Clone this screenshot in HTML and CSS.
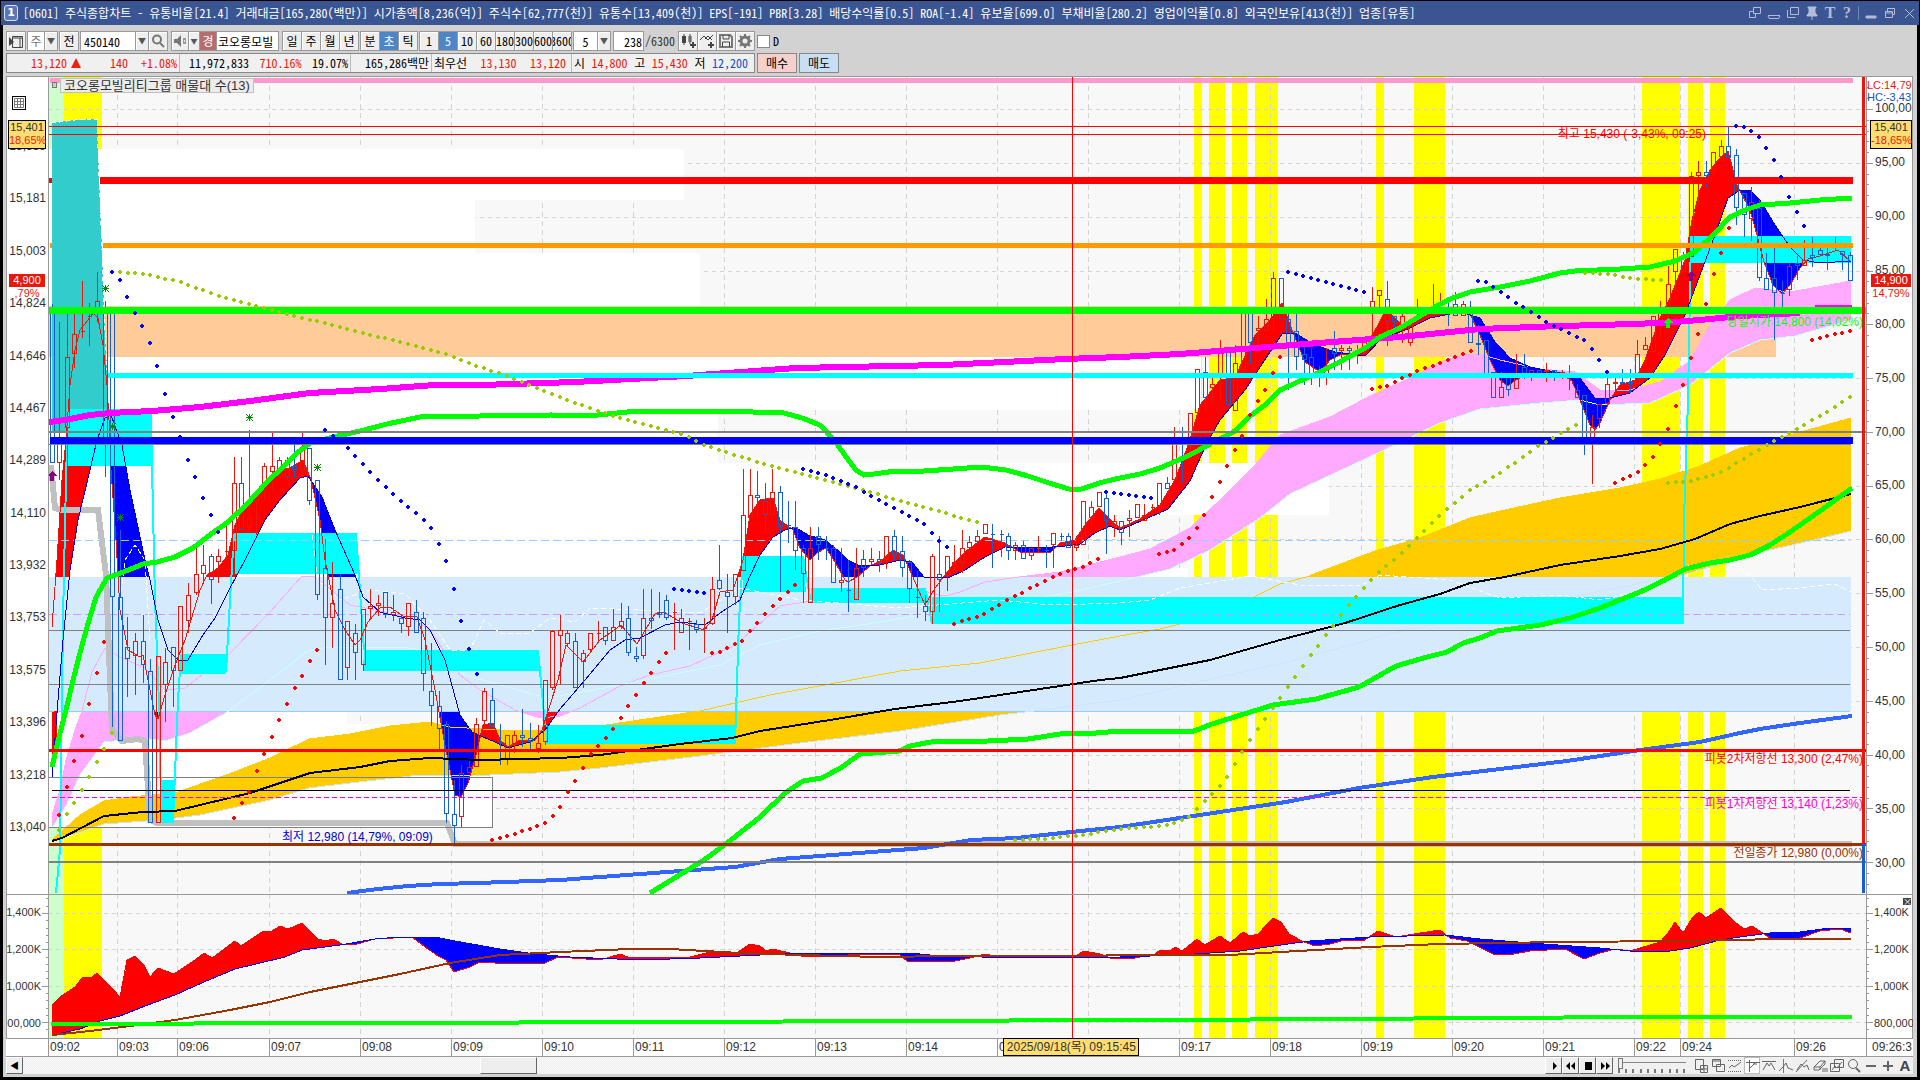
FILE: index.html
```html
<!DOCTYPE html>
<html lang="ko">
<head>
<meta charset="utf-8">
<title>[0601] 주식종합차트</title>
<link rel="stylesheet" href="styles.css">
</head>
<body>
<div class="app">
  <header class="titlebar">
    <span class="badge">1</span>
    <h1 class="caption">[0601] 주식종합차트 - 유통비율[21.4] 거래대금[165,280(백만)] 시가총액[8,236(억)] 주식수[62,777(천)] 유통수[13,409(천)] EPS[-191] PBR[3.28] 배당수익률[0.5] ROA[-1.4] 유보율[699.0] 부채비율[280.2] 영업이익률[0.8] 외국인보유[413(천)] 업종[유통]</h1>
    <div class="winbtns">
      <button aria-label="분리"><svg width="14" height="14"><path d="M5.5 1.5h7v6h-7zM1.5 5.5v6h6v-4M1.5 5.5h4"/></svg></button>
      <button aria-label="내리기"><svg width="14" height="14"><path d="M1 9.5h12M2 12.5h10M1 10l1 2M13 10l-1 2"/></svg></button>
      <button aria-label="복제"><svg width="14" height="14"><path d="M4.500 1.500h8v7h-8zM1.500 4v7.500h8"/></svg></button>
      <button aria-label="고정"><svg width="14" height="14"><path class="solid" d="M3 1h8v1h-1v5l2 2v1H2V9l2-2V2H3z"/><path d="M7 9v5"/></svg></button>
      <button aria-label="글꼴" class="serif">T</button>
      <button aria-label="도움말" class="serif">?</button>
      <i class="bar"></i>
      <button aria-label="최소화"><svg width="14" height="14"><path class="solid" d="M2 10h10v2H2z"/></svg></button>
      <button aria-label="이전 크기"><svg width="14" height="14"><path d="M4.500 5V2.500h7v6h-2M2.500 5.500h7v6h-7zM2 7h8"/></svg></button>
      <button aria-label="닫기"><svg width="14" height="14"><path d="M3 3l9 9M12 3l-9 9"/></svg></button>
    </div>
  </header>

  <div class="frame">
    <div class="toolbar">
      <button class="tb w20" aria-label="패널"><svg width="16" height="16"><path class="k" d="M4.500 3.500h10v11h-10zM4 5h11M12 5v9"/><path class="kf" d="M1 4v9l5-4z"/></svg></button>
      <div class="combo"><button class="tb w18 dim">주</button><button class="tb w14" aria-label="목록">▼</button></div>
      <button class="tb w20">전</button>
      <div class="combo"><input class="code" aria-label="종목코드" value="450140"><button class="tb w14" aria-label="종목 목록">▼</button><button class="tb w20" aria-label="검색"><svg width="16" height="16"><circle class="g2" cx="7" cy="6.500" r="4"/><path class="g2" d="M10 10l4 4"/></svg></button></div>
      <div class="combo gap"><button class="tb w18" aria-label="소리"><svg width="14" height="14"><path class="kf2" d="M1 5h3l4-4v12L4 9H1z"/><path class="k" d="M10 5h3M10 9h3M10 7h1M12 7h1"/></svg></button><button class="tb w12" aria-label="소리 설정">▼</button><span class="warn">경</span><input class="name" aria-label="종목명" value="코오롱모빌"></div>
      <div class="combo gap"><button class="tb w20">일</button><button class="tb w20">주</button><button class="tb w20">월</button><button class="tb w20">년</button></div>
      <div class="combo"><button class="tb w20">분</button><button class="tb w20 on">초</button><button class="tb w20">틱</button></div>
      <div class="combo"><button class="tb w20">1</button><button class="tb w20 on">5</button><button class="tb w20">10</button><button class="tb w20">60</button><button class="tb w20">180</button><button class="tb w20">300</button><button class="tb w20">600</button><button class="tb w20">3600</button></div>
      <div class="combo"><input class="five" aria-label="간격" value="5"><button class="tb w14" aria-label="간격 목록">▼</button></div>
      <label class="count"><input value="238" aria-label="봉 개수">/6300</label>
      <div class="combo">
        <button class="tb w20" aria-label="봉 추가"><svg width="16" height="16"><path class="kf" d="M2 3h4v7H2z"/><path class="gf" d="M8 3h4v6H8z"/><path class="k" d="M4 1v11M10 1v10"/><path class="kf" d="M12 9h2v2h2v2h-2v2h-2v-2h-2v-2h2z"/></svg></button>
        <button class="tb w20" aria-label="지표 추가"><svg width="16" height="16"><path class="k" d="M1 7l4-4 4 4 5-5M6 6l3-3 4 4"/><path class="kf" d="M11 9h2v2h2v2h-2v2h-2v-2H9v-2h2z"/></svg></button>
        <button class="tb w20" aria-label="저장"><svg width="16" height="16"><path class="g2" d="M2 2h10l2 2v10H2z"/><path class="k" d="M5 2v4h6V2M4.500 14V9h7v5"/></svg></button>
        <button class="tb w20" aria-label="설정"><svg width="16" height="16"><circle cx="8" cy="8" r="4" class="g3"/><path class="g2" d="M8 1v3M8 12v3M1 8h3M12 8h3M3 3l2 2M11 11l2 2M3 13l2-2M11 5l2-2"/></svg></button>
      </div>
      <label class="dcheck"><input type="checkbox">D</label>
    </div>

    <div class="quote">
      <div class="prices">
        <div class="cell c1"><b class="r">13,120<svg width="10" height="10"><path fill="#f02010" d="M5 0l5 10H0z"/></svg></b><b class="r">140</b><b class="r">+1.08%</b></div>
        <div class="cell c2"><b>11,972,833</b><b class="r">710.16%</b><b>19.07%</b></div>
        <div class="cell c3"><b>165,286백만</b></div>
        <div class="cell c4"><b>최우선</b><b class="r">13,130</b><b class="r">13,120</b></div>
        <div class="cell c5"><b>시</b><b class="r">14,800</b><b>고</b><b class="r">15,430</b><b>저</b><b class="b">12,200</b></div>
      </div>
      <button class="buy">매수</button>
      <button class="sell">매도</button>
    </div>

    <main class="chart">
      <section class="panel main">
        <svg class="plot" id="price" viewBox="6 77 1907 817" preserveAspectRatio="none" aria-label="가격 차트"></svg>
        <ul class="axis left"><li>15,359</li><li>15,181</li><li>15,003</li><li>14,824</li><li>14,646</li><li>14,467</li><li>14,289</li><li>14,110</li><li>13,932</li><li>13,753</li><li>13,575</li><li>13,396</li><li>13,218</li><li>13,040</li></ul>
        <div class="canvas">
          <span class="legend">코오롱모빌리티그룹 매물대 수(13)</span>
          <span class="note high">최고 15,430 (-3,43%, 09:25)</span>
          <span class="note low">최저 12,980 (14,79%, 09:09)</span>
          <span class="note open">당일시가 14,800 (14,02%)</span>
          <span class="note p2">피봇2차저항선 13,300 (2,47%)</span>
          <span class="note p1">피봇1차저항선 13,140 (1,23%)</span>
          <span class="note prev">전일종가 12,980 (0,00%)</span>
        </div>
        <ul class="axis right"><li>100,00</li><li>95,00</li><li>90,00</li><li>85,00</li><li>80,00</li><li>75,00</li><li>70,00</li><li>65,00</li><li>60,00</li><li>55,00</li><li>50,00</li><li>45,00</li><li>40,00</li><li>35,00</li><li>30,00</li></ul>
        <button class="gridbtn" aria-label="표"><svg width="10" height="10"><path d="M.5.500h9v9h-9zM3.500 0v10M6.500 0v10M0 3.500h10M0 6.500h10"/></svg></button>
        <div class="tag tagl"><span>15,401</span><em>18,65%</em></div>
        <div class="tag tagr"><span>15,401</span><em>-18,65%</em></div>
        <div class="now nowl"><span>4,900</span><em>,79%</em></div>
        <div class="now nowr"><span>14,900</span><em>14,79%</em></div>
        <div class="lc"><span class="r">LC:14,79</span><span class="b">HC:-3,43</span></div>
      </section>
      <section class="panel sub">
        <svg class="plot" id="volume" viewBox="6 894 1907 144" preserveAspectRatio="none" aria-label="보조 지표"></svg>
        <ul class="axis left"><li>1,400K</li><li>1,200K</li><li>1,000K</li><li>00,000</li></ul>
        <div class="canvas"></div>
        <ul class="axis right"><li>1,400K</li><li>1,200K</li><li>1,000K</li><li>800,000</li></ul>
        <button class="closer" aria-label="지표 닫기">×</button>
      </section>
      <div class="times">
        <span></span><span>09:02</span><span>09:03</span><span>09:06</span><span>09:07</span><span>09:08</span><span>09:09</span><span>09:10</span><span>09:11</span><span>09:12</span><span>09:13</span><span>09:14</span><span>0</span><span></span><span>09:17</span><span>09:18</span><span>09:19</span><span>09:20</span><span>09:21</span><span>09:22</span><span>09:24</span><span>09:26</span><span class="end">09:26:3</span>
        <div class="stamp">2025/09/18(목) 09:15:45</div>
      </div>
    </main>

    <footer class="bottom">
      <button class="raised" aria-label="왼쪽">◀</button>
      <div class="track"><i class="thumb"></i></div>
      <div class="combo">
        <button class="raised" aria-label="재생"><svg width="12" height="12"><path d="M5 2v8l4-4z"/></svg></button>
        <button class="raised" aria-label="뒤로"><svg width="12" height="12"><path d="M5 2v8L1 6zM10 2v8L6 6z"/></svg></button>
        <button class="raised" aria-label="정지"><svg width="12" height="12"><path d="M3 2h7v8H3z"/></svg></button>
        <button class="raised" aria-label="앞으로"><svg width="12" height="12"><path d="M2 2v8l4-4zM7 2v8l4-4z"/></svg></button>
      </div>
      <div class="speed"><input type="range" min="0" max="9" value="0" aria-label="속도"><svg width="68" height="4"><path d="M1 0v4M8 0v4M15 0v4M23 0v4M30 0v4M37 0v4M44 0v4M52 0v4M59 0v4M66 0v4"/></svg></div>
      <div class="tools">
        <button aria-label="창 추가"><svg width="16" height="16"><path d="M2.500 1.500h8v10h-8z"/><path d="M7.500 7.500h7v7h-7zM11 8v6M8 11h6"/></svg></button>
        <button aria-label="겹치기"><svg width="16" height="16"><path d="M2.500 1.500h8v7h-8zM6.500 6.500h8v7h-8zM2 3h8"/></svg></button>
        <button aria-label="영역"><svg width="16" height="16"><path stroke-dasharray="1 1" d="M1 2.500h14M1 13.500h14"/><path d="M2 10l3-3 2 2 3-2 4-3"/></svg></button>
        <button class="set" aria-label="십자선"><svg width="16" height="16"><path d="M4.500 2v12M1 4.500h14M5 10l5-5M8 6h4"/></svg></button>
        <button aria-label="수평선"><svg width="16" height="16"><path d="M1 3.500h14M2 12l4-7 2 3 2-3 4 7"/></svg></button>
        <button aria-label="수직선"><svg width="16" height="16"><path stroke="#a06080" d="M5.500 1v14"/><path d="M1 13l4-4 3-4 2 5 5 2"/></svg></button>
        <button aria-label="추세선"><svg width="16" height="16"><path d="M1 14L12 2M2 12l4-6 3 3 3-2 2 5"/></svg></button>
        <button aria-label="지우기"><svg width="16" height="16"><path d="M2 9l6-6h5l-5 6zM2 9v3h5l6-6V3M8 9v3"/><path d="M11 10v4M13 10v4M15 10v4"/></svg></button>
        <button aria-label="차트 겹침"><svg width="16" height="16"><path d="M5.500 1.500h9v8h-9zM1.500 5.500h9v8h-9zM3 12l3-4 2 2 5-6"/></svg></button>
        <button aria-label="확대경"><svg width="16" height="16"><circle cx="7" cy="6" r="4.500"/><path stroke-width="2" d="M10 10l4 4"/></svg></button>
        <button aria-label="축소"><svg width="16" height="16"><path stroke-width="2" d="M3 8h10"/></svg></button>
        <button aria-label="확대"><svg width="16" height="16"><path stroke-width="2" d="M3 8h10M8 3v10"/></svg></button>
        <button class="big">A</button>
      </div>
    </footer>
  </div>
</div>
<script src="app.js"></script>
</body>
</html>
```
FILE: styles.css
```css
* { box-sizing: border-box; }
body { margin: 0; background: #000; }
body, button, input {
  font: 12px/16px "Noto Sans Mono CJK KR", "Noto Sans CJK KR", sans-serif;
  color: #000;
}
button { padding: 0; border: 0; background: none; }
ul { margin: 0; padding: 0; list-style: none; }
svg { display: block; }
.r { color: #e8180c; }
.b { color: #1050c8; }

.app { display: flex; flex-direction: column; height: 100vh; min-height: 600px; padding: 1px 1px 3px; }
.titlebar { display: flex; align-items: center; flex: none; height: 24px; padding: 0 3px; background: #3a5591; color: #fff; }
.badge { width: 14px; height: 16px; border: 1px solid #dde5f5; border-radius: 3px; background: #5a78b5; font: bold 11px/14px "DejaVu Sans", sans-serif; text-align: center; }
.caption { flex: 1; margin: 0 0 0 5px; font-size: 12px; font-weight: 400; white-space: nowrap; }
.winbtns { display: flex; align-items: center; gap: 5px; }
.winbtns svg { fill: none; stroke: #b0bcda; }
.winbtns .solid { fill: #b0bcda; }
.serif { width: 12px; font: bold 16px/16px "Liberation Serif", serif; color: #b0bcda; }
.bar { width: 1px; height: 14px; background: #7085b5; }

.frame { display: flex; flex-direction: column; flex: 1; min-height: 0; margin: 0 2px; padding: 0 4px 3px 3px; background: #d2d2d2; }
.toolbar { display: flex; align-items: center; gap: 1px; height: 28px; padding-top: 4px; }
.combo { display: flex; }
.gap { margin-left: 2px; }
.tb { height: 20px; border: 1px solid #999; background: #eee; margin-right: -1px; overflow: hidden; white-space: nowrap; display: flex; align-items: center; justify-content: center; box-shadow: inset 1px 1px #fff; }
.toolbar > .tb { margin-right: 0; }
.combo > :last-child { margin-right: 0; }
.w20 { width: 20px; }
.w18 { width: 18px; }
.w14 { width: 14px; font-size: 8px; color: #555; }
.w12 { width: 12px; font-size: 7px; color: #555; }
.dim { color: #777; background: #fff; }
.on { background: #4c86c6; color: #fff; box-shadow: none; }
.code, .name, .five, .count input { height: 20px; border: 1px solid #999; background: #fff; padding: 0 1px; margin-right: -1px; }
.code { width: 56px; padding-left: 3px; }
.name { width: 63px; }
.five { width: 25px; text-align: center; }
.warn { width: 18px; height: 20px; background: #b56c6c; border: 1px solid #999; color: #fff; line-height: 18px; text-align: center; margin-right: -1px; }
.count { display: flex; align-items: center; width: 64px; color: #333; margin-left: 1px; }
.count input { width: 31px; text-align: right; margin-right: 1px; }
.dcheck { display: flex; align-items: center; gap: 3px; margin-left: 1px; }
.dcheck input { appearance: none; width: 13px; height: 13px; margin: 0; border: 1px solid #888; background: #fff; }
.k { fill: none; stroke: #444; }
.kf { fill: #444; }
.kf2 { fill: #777; }
.gf { fill: #999; }
.g2 { fill: none; stroke: #777; stroke-width: 2; }
.g3 { fill: none; stroke: #777; stroke-width: 3; }

.quote { display: flex; gap: 2px; height: 20px; }
.prices { display: flex; border: 1px solid #888; background: #f0f0f0; }
.cell { display: flex; justify-content: space-between; align-items: center; padding: 0 2px; border-right: 1px solid #bbb; white-space: nowrap; }
.cell:last-child { border: 0; }
.cell b { font-weight: 400; }
.c1 { width: 173px; padding-left: 24px; }
.c1 b:first-child { display: flex; align-items: center; gap: 4px; margin-right: 16px; }
.c2 { width: 171px; padding-left: 9px; }
.c3 { width: 81px; justify-content: flex-end; }
.c4 { width: 140px; padding-right: 5px; }
.c5 { width: 182px; padding-right: 6px; }
.buy, .sell { width: 40px; border: 1px solid #888; background: #f6d0ca; }
.sell { background: #c8def4; }

.chart { display: flex; flex-direction: column; flex: 1; min-height: 0; margin-top: 3px; border: 1px solid #999; border-width: 1px 0 0; font-family: "Liberation Sans", "Noto Sans CJK KR", sans-serif; }
.panel { position: relative; display: grid; grid-template-columns: 42px 1fr 47px; min-height: 0; background: #fff; overflow: hidden; }
.main { flex: 817 1 0; }
.sub { flex: 144 1 0; }
.plot { position: absolute; inset: 0; width: 100%; height: 100%; shape-rendering: crispEdges; }
.axis { position: relative; display: flex; flex-direction: column; justify-content: space-between; color: #333; white-space: nowrap; }
.main .left { padding: 61px 2px 59px; text-align: right; }
.main .right { padding: 23px 0 23px 9px; }
.sub .left { padding: 10px 7px 7px 0; text-align: right; font-size: 11px; }
.sub .right { padding: 10px 0 7px 8px; font-size: 11px; }
.canvas { position: relative; overflow: hidden; }
.legend { position: absolute; left: 12px; top: 1px; height: 15px; padding: 0 3px; border: 1px solid #c0c0c0; background: #ececec; color: #333; font-size: 13px; line-height: 13px; white-space: nowrap; }
.note { position: absolute; white-space: nowrap; }
.high { right: 160px; top: 6%; color: #f00; }
.low { left: 234px; top: 92%; color: #00c; }
.open { right: 3px; top: 29%; color: #0f0; }
.p2 { right: 3px; top: 82.500%; color: #f00; }
.p1 { right: 3px; top: 88%; color: #f0c; }
.prev { right: 3px; top: 94%; color: #930; }
.tag, .now, .lc { position: absolute; display: flex; flex-direction: column; white-space: nowrap; font-size: 11px; }
.tag em, .now em { font-style: normal; color: #e8180c; }
.tag { top: 43px; width: 38px; height: 29px; border: 1px solid #000; background: #ffdd70; line-height: 13px; text-align: center; color: #333; }
.tagl { left: 2px; }
.tagr { right: 1px; width: 42px; }
.now { top: 197px; width: 36px; line-height: 13px; text-align: center; }
.now span { background: #e8180c; color: #fff; }
.nowl { left: 3px; }
.nowr { right: 2px; width: 40px; }
.lc { right: 0; top: 2px; width: 46px; line-height: 12px; }
.gridbtn { position: absolute; left: 6px; top: 19px; width: 14px; height: 14px; border: 1px solid #000; padding: 1px; }
.gridbtn svg { fill: none; stroke: #777; }
.closer { position: absolute; right: 2px; top: 4px; width: 8px; height: 7px; background: #444; color: #fff; font-size: 9px; line-height: 7px; }

.times { position: relative; flex: none; display: grid; grid-template-columns: 42px 69fr 60fr 92fr repeat(15, 91fr) 46fr 114fr 72fr 47px; height: 19px; border: 1px solid #999; border-width: 1px 0; background: #fff; color: #333; }
.times span { border-left: 1px solid #999; padding-left: 1px; min-width: 0; white-space: nowrap; }
.times span:first-child { border: 0; }
.times .end { padding-left: 5px; }
.stamp { position: absolute; left: 52.300%; top: -1px; width: 136px; height: 18px; border: 1px solid #000; background: #ffdd70; text-align: center; white-space: nowrap; }

.bottom { display: flex; flex: none; height: 17px; background: #f0f0f0; }
.raised { width: 17px; height: 17px; border: 1px solid; border-color: #fff #666 #666 #fff; background: #eee; font-size: 9px; line-height: 14px; display: flex; align-items: center; justify-content: center; }
.track { flex: 1; padding-left: 457px; background: repeating-conic-gradient(#eee 0 25%, #fafafa 0 50%) 0 0 / 2px 2px; }
.thumb { display: block; width: 57px; height: 17px; border: 1px solid; border-color: #fff #666 #666 #fff; background: #eee; }
.speed { width: 80px; padding: 0 5px; }
.speed input { appearance: none; display: block; width: 68px; height: 12px; margin: 0; background: linear-gradient(#888, #888) 0 5px / 100% 1px no-repeat; }
.speed input::-webkit-slider-thumb { appearance: none; width: 5px; height: 11px; border: 1px solid #777; background: #eee; }
.speed svg { stroke: #000; }
.tools { display: flex; gap: 1px; }
.tools button { width: 16px; height: 17px; }
.tools svg { fill: none; stroke: #666; }
.tools .set { background: #fff; border: 1px solid #bbb; }
.tools .big { font: bold 15px/16px "Liberation Sans", sans-serif; color: #444; }

.line { fill: none; }
```
FILE: app.js
```js
const NS = 'http://www.w3.org/2000/svg';
const price = document.getElementById('price');
const volume = document.getElementById('volume');

function add(svg, name, attrs) {
  const el = document.createElementNS(NS, name);
  for (const key in attrs) el.setAttribute(key, attrs[key]);
  svg.appendChild(el);
}
const rect = (svg, x, y, x2, y2, fill) => add(svg, 'rect', { x, y, width: x2 - x, height: y2 - y, fill });
const line = (svg, pts, stroke, width = 1, dash = '') =>
  add(svg, 'polyline', { points: pts, stroke, 'stroke-width': width, 'stroke-dasharray': dash, class: 'line' });
const poly = (svg, pts, fill) => add(svg, 'polygon', { points: pts, fill });
const hline = (svg, y, x, x2, stroke, width, dash) => line(svg, `${x},${y} ${x2},${y}`, stroke, width, dash);
const parse = s => s.split(' ').map(p => p.split(',').map(Number));
const reversed = s => s.split(' ').reverse().join(' ');

function at(pts, x) {
  for (let i = 1; i < pts.length; i++) {
    if (x <= pts[i][0]) {
      const [x0, y0] = pts[i - 1], [x1, y1] = pts[i];
      return y0 + (y1 - y0) * (x - x0) / (x1 - x0 || 1);
    }
  }
  return pts[pts.length - 1][1];
}

// Fills the gap between two averages: red while the fast one leads, blue otherwise.
function ribbon(svg, fast, slow) {
  const f = parse(fast), s = parse(slow);
  let red = '', blue = '';
  for (let x = 52; x < 1851; x++) {
    const a = Math.round(at(f, x)), b = Math.round(at(s, x));
    if (a < b) red += `M${x} ${a}h1V${b}h-1z`;
    if (a > b) blue += `M${x} ${b}h1V${a}h-1z`;
  }
  add(svg, 'path', { d: red, fill: '#f00' });
  add(svg, 'path', { d: blue, fill: '#00f' });
}

function dots(pts, color) {
  const p = parse(pts), n = Math.round((p[p.length - 1][0] - p[0][0]) / 7.58);
  for (let i = 0; i <= n; i++) {
    const x = Math.round(p[0][0] + i * 7.58), y = Math.round(at(p, x));
    add(price, 'path', { d: `M${x - 1} ${y - 2}h2v1h1v2h-1v1h-2v-1h-1v-2h1z`, fill: color });
  }
}

const STEPS = [117, 177, 269, 360, 451, 542, 633, 724, 815, 906, 997, 1088, 1179, 1270, 1361, 1452, 1543, 1634, 1680, 1794];
const BANDS = [[1194, 1202], [1209, 1225], [1232, 1247], [1255, 1278], [1376, 1384], [1414, 1445], [1642, 1680], [1688, 1703], [1710, 1725]];

function backdrop(svg, top, bottom, levels) {
  rect(svg, 48, top, 1866, bottom, '#f8f8f8');
  BANDS.forEach(([a, b]) => rect(svg, a, top, b, bottom, '#ff0'));
  rect(svg, 48, top, 64, bottom, '#cfc');
  rect(svg, 64, top, 102, bottom, '#ff0');
  STEPS.forEach(x => line(svg, `${x + .5},${top} ${x + .5},${bottom}`, '#d4d4d4', 1, '5 4'));
  levels.forEach(y => hline(svg, y + .5, 48, 1866, '#d4d4d4', 1, '4 4'));
}

const levels = [109, 163, 217, 271, 324, 378, 432, 486, 539, 593, 647, 701, 755, 808, 862];
backdrop(price, 77, 894, levels);

// Price-by-volume rows
[[149, 200, 684], [200, 253, 475], [253, 306, 700], [357, 410, 1201], [410, 463, 718], [463, 515, 1329], [515, 568, 1081], [568, 578, 1188], [711, 724, 347], [724, 776, 502], [776, 828, 492]]
  .forEach(([a, b, x]) => rect(price, 49, a, x, b, '#fff'));
rect(price, 49, 306, 1776, 357, '#fc9');

const goldTop = '52,840 80,815 104,801 130,797 175,793 229,774 270,758 309,739 350,734 390,726 430,722 450,727 500,730 560,730 606,725 700,711 770,695 830,684 900,671 980,663 1072,645 1120,636 1160,629 1200,619 1235,606 1260,594 1280,584 1306,577 1375,551 1420,538 1470,518 1500,511 1560,498 1620,488 1660,479 1700,466 1740,448 1790,435 1851,418';
const goldLow = '52,842 104,824 160,820 200,815 270,800 309,788 350,783 420,775 490,775 560,772 600,768 700,756 800,743 900,731 1000,715 1034,711 1120,700 1300,659 1393,633 1453,620 1560,599 1683,575 1720,564 1760,552 1810,541 1851,531';
const pinkTop = '52,815 60,790 66,760 75,730 82,711 92,672 105,648 120,657 145,668 165,690 185,688 230,653 270,612 302,576 315,577 350,605 375,610 415,620 430,630 460,675 480,690 515,710 540,718 560,716 580,708 620,686 650,675 690,666 735,645 780,606 830,598 880,590 905,588 945,596 960,592 985,582 1019,577 1060,572 1120,557 1150,549 1190,528 1220,500 1255,465 1280,435 1330,417 1370,396 1410,378 1440,362 1465,354 1480,354 1500,360 1540,369 1575,372 1600,390 1625,391 1660,382 1690,361 1710,325 1730,300 1755,288 1790,292 1851,281';
const pinkLow = '52,828 66,806 80,775 104,742 143,738 165,741 190,733 229,711 270,680 309,650 330,647 400,647 430,651 465,675 500,685 540,696 560,696 620,685 720,665 760,645 820,631 880,622 950,610 1000,605 1072,592 1120,581 1170,569 1210,550 1260,518 1290,494 1380,452 1440,423 1480,409 1540,403 1580,400 1600,405 1650,403 1690,385 1730,353 1760,340 1795,336 1851,320';
const fast = '52,627 57,560 62,480 66,440 70,385 75,350 80,330 88,320 93,313 98,318 103,345 107,385 109,420 111,470 116,540 120,610 128,650 140,657 143,655 150,690 155,715 158,719 165,695 175,665 185,640 200,590 207,575 218,568 228,555 235,525 245,505 262,487 275,472 290,468 303,460 311,480 320,520 325,560 335,610 345,630 355,645 360,640 368,622 380,608 390,607 403,616 417,617 425,640 435,690 445,745 455,795 461,797 468,783 476,755 483,725 493,723 500,740 508,747 520,740 535,740 542,730 550,705 558,680 566,645 583,662 600,640 621,625 637,644 655,614 664,612 682,623 704,630 712,620 720,592 733,590 743,560 750,515 760,500 773,498 780,520 793,530 800,548 810,560 817,553 826,548 835,562 845,580 848,582 857,577 870,566 882,560 893,550 903,555 912,575 925,605 935,588 945,575 955,562 965,552 985,537 1005,543 1020,552 1050,553 1060,543 1075,540 1085,525 1099,508 1115,524 1120,528 1140,519 1160,505 1175,480 1190,440 1200,405 1220,380 1235,378 1242,362 1255,335 1270,320 1282,303 1292,330 1305,362 1320,372 1330,360 1340,355 1355,354 1365,348 1378,325 1386,310 1395,318 1403,326 1412,320 1430,314 1445,311 1470,314 1480,335 1490,360 1500,380 1508,386 1516,380 1530,373 1560,373 1572,381 1580,400 1590,425 1595,430 1600,423 1610,400 1620,385 1635,380 1645,360 1660,318 1670,298 1685,260 1692,220 1700,190 1710,170 1720,158 1728,151 1737,185 1750,210 1757,235 1764,262 1773,285 1782,294 1790,285 1800,268 1808,259 1820,256 1838,250 1851,262';
const slow = '52,777 58,700 63,640 70,570 78,520 90,470 97,440 105,418 111,415 122,445 130,490 145,560 150,580 158,620 168,650 178,660 188,660 203,635 215,618 230,588 245,560 265,520 280,500 300,478 308,476 322,497 335,530 355,575 363,597 380,612 405,618 420,620 430,630 445,660 460,715 472,732 483,737 495,742 508,748 530,742 545,730 560,709 585,680 610,650 625,640 640,638 665,625 680,622 705,625 720,613 740,600 750,576 760,555 773,537 785,530 795,527 808,535 825,540 840,552 848,560 860,566 880,565 900,560 912,562 924,577 950,577 965,570 985,557 1005,547 1040,548 1065,546 1080,544 1095,533 1110,526 1120,530 1150,517 1168,509 1190,481 1205,447 1220,420 1245,390 1270,352 1282,334 1295,333 1315,345 1335,352 1365,356 1380,340 1410,328 1430,318 1460,312 1480,318 1495,342 1510,358 1530,367 1560,373 1580,378 1595,398 1610,398 1630,393 1650,378 1665,355 1685,315 1700,275 1715,235 1728,198 1740,190 1750,190 1760,200 1775,225 1790,247 1803,260 1820,263 1851,261';

poly(price, pinkTop + ' ' + reversed(pinkLow), '#faf');
poly(price, goldTop + ' ' + reversed(goldLow), '#fc0');
line(price, goldLow, '#cde4ff');
ribbon(price, fast, slow);
rect(price, 49, 577, 1851, 711, '#d6eafd');
hline(price, 711.5, 49, 1850, '#9cf');
line(price, pinkTop, '#faf');
line(price, pinkLow, '#c8ffff');
line(price, goldTop, '#fc0');
line(price, goldLow, '#cde4ff');

// Opening block and trailing silver step line
line(price, '51,465 55,508 62,510 98,510 106,575 112,730 122,741 138,739 145,741 150,820 157,823 447,823 455,844 1852,844', '#c0c0c0', 6);
hline(price, 777.5, 49, 492, '#808080');
hline(price, 827.5, 49, 492, '#808080');
line(price, '492.5,777 492.5,828', '#808080');
poly(price, '52,123 75,120 97,119 98,150 100,200 102,250 104,310 107,370 108,432 52,432', '#3cc');
line(price, '52,123 75,120 97,119 98,150 100,200 102,250 104,310 107,370 108,432', '#fff', 1, '4 3');
rect(price, 54, 711, 57, 745, '#f00');

// Range boxes
['68,410 151,410 151,466 68,466', '181,654 226,654 226,674 179,674', '235,533 356,533 358,574 235,574', '364,650 538,650 540,671 363,671', '546,725 735,725 735,744 546,744', '743,556 803,556 806,592 743,592', '811,588 925,588 931,603 811,603', '932,597 1683,597 1683,624 932,624', '1691,236 1851,236 1851,263 1691,263', '161,780 175,780 173,823 161,823']
  .forEach(p => poly(price, p, '#0ff'));
line(price, '56,893 60,850 63,620 66,480 68,410 151,410 152,466 155,600 160,730 161,822 173,822 178,700 181,654', '#0ff', 2);
line(price, '226,672 230,600 234,533', '#0ff', 2);
line(price, '356,533 364,650', '#0ff', 2);
line(price, '538,650 545,725', '#0ff', 2);
line(price, '735,744 739,620 743,556', '#0ff', 2);
line(price, '803,556 811,603', '#0ff', 2);
line(price, '925,588 932,624', '#0ff', 2);
line(price, '1683,624 1684,520 1688,400 1691,236', '#0ff', 2);

hline(price, 540.5, 49, 1850, '#9cf', 1, '8 4');
hline(price, 614.5, 49, 1850, '#c9f', 1, '8 4');
hline(price, 630.5, 49, 1850, '#808080');
hline(price, 684.5, 49, 1850, '#808080');
line(price, '120,600 125,560 135,545 145,560 150,640', '#fff', 1, '5 3');
line(price, '312,535 318,580 340,600 370,590 405,594 430,620 450,650 470,650 484,620 500,633 530,633 550,618 575,622 590,608 640,610 700,613 740,588 800,600 850,604 900,608 1000,600 1050,605 1120,603 1150,600 1180,588 1250,576 1300,585 1360,586 1380,575 1450,580 1500,598 1560,595 1600,600 1640,592 1690,565 1730,562 1750,575 1762,590 1800,588 1835,584 1851,592', '#fff', 1, '5 3');

line(price, fast, '#e8180c');
line(price, slow, '#00c');

// x, high, low, body top, body bottom, direction
const candles = `52,304,463,313,463,b 59,322,480,439,463,r 67,313,470,357,428,r 74,313,368,334,354,r 82,281,338,331,331,r 89,303,346,316,316,r 97,272,322,301,313,r 105,301,477,313,442,b 112,313,727,313,597,b 120,530,741,597,741,b 127,617,697,647,659,b 135,633,695,641,656,r 143,615,683,641,665,b 150,659,823,671,823,b 158,656,823,656,823,r 165,648,722,662,685,r 173,647,707,647,671,b 180,606,671,606,671,r 188,583,633,595,621,r 196,545,595,574,593,r 203,545,583,565,574,r 211,554,604,556,580,b 218,549,583,556,562,r 226,525,560,551,551,r 234,457,551,483,551,r 241,457,530,483,530,b 249,430,533,518,527,r 256,490,535,493,502,r 264,463,500,466,490,r 272,433,490,466,472,r 279,457,475,460,470,r 287,457,480,460,477,b 294,445,478,466,470,b 302,433,478,448,470,r 309,448,505,448,501,b 317,480,600,480,595,b 325,539,665,568,618,b 332,562,648,603,618,r 340,574,680,589,680,b 347,621,680,621,668,r 355,624,680,633,653,b 363,609,671,609,665,r 370,589,619,606,609,r 378,595,616,603,606,r 385,592,618,592,615,b 393,595,621,612,615,r 401,615,633,618,624,b 408,603,636,603,627,r 416,600,633,612,633,b 423,612,691,618,674,b 431,643,726,691,706,b 439,691,750,706,729,b 446,721,823,724,814,b 454,780,843,814,826,b 461,765,827,773,817,r 469,760,773,767,773,r 476,718,767,724,767,r 484,688,726,691,721,r 492,688,727,700,727,b 500,724,765,742,742,b 507,735,765,735,759,r 514,731,753,735,745,r 522,709,747,735,738,b 530,723,750,738,742,b 538,725,753,743,749,r 545,680,745,680,742,r 552,630,690,631,688,r 560,615,685,630,636,r 567,630,647,633,644,r 575,633,688,641,688,b 583,650,688,653,662,r 590,633,653,633,650,r 598,621,643,633,633,r 605,627,645,627,641,b 613,609,641,627,641,r 621,603,629,621,627,r 628,606,656,618,653,b 636,647,662,656,659,b 643,589,659,618,656,r 651,589,629,618,621,b 659,592,618,612,615,b 666,595,620,600,618,b 674,603,650,612,612,r 681,609,633,618,633,r 689,618,650,621,621,r 696,620,633,624,630,b 704,618,653,628,628,r 712,577,625,589,624,r 719,545,590,580,589,b 727,574,633,592,597,b 735,574,605,574,597,r 743,469,571,515,571,r 750,469,518,495,518,r 757,471,518,495,498,b 765,483,531,501,515,b 772,469,515,492,515,r 780,486,592,492,527,b 788,501,543,525,525,b 795,501,570,527,551,b 803,545,603,548,574,b 810,527,603,548,603,r 818,527,560,536,545,b 826,536,560,548,548,b 833,545,583,548,583,b 841,548,592,580,583,r 848,560,612,590,590,b 856,548,600,568,600,r 863,550,577,559,568,b 871,548,565,559,562,r 879,551,572,559,563,b 886,536,569,536,560,r 894,530,560,536,555,b 902,536,577,551,568,b 909,560,603,562,589,b 917,571,618,597,597,b 925,595,621,606,612,b 932,554,624,556,612,r 939,536,612,574,580,b 947,556,591,556,576,r 954,545,571,562,565,r 962,530,573,548,563,r 969,536,554,542,548,r 977,530,545,536,542,r 985,524,534,524,534,r 992,524,568,534,534,b 1001,530,557,534,534,b 1008,533,560,536,551,b 1015,542,560,545,551,r 1023,541,559,545,559,b 1031,548,560,548,556,r 1038,536,553,548,548,r 1046,545,568,550,550,b 1053,533,568,533,545,r 1061,533,541,536,536,b 1068,533,548,536,548,b 1076,536,551,545,548,r 1083,501,545,501,545,r 1091,501,527,507,518,r 1099,492,507,492,507,r 1106,492,554,498,521,b 1114,515,537,521,527,r 1121,521,545,521,533,b 1129,510,537,518,521,r 1137,504,518,504,518,r 1144,504,521,515,521,r 1152,504,516,507,507,r 1159,483,515,483,507,r 1167,477,489,483,489,b 1174,427,480,437,480,r 1182,427,483,437,440,b 1190,413,460,413,447,r 1197,369,425,369,413,r 1205,357,411,372,398,b 1212,373,404,384,388,r 1220,340,400,351,378,r 1228,351,405,351,405,b 1235,345,411,363,411,r 1243,313,375,313,370,r 1250,313,364,313,343,b 1258,316,348,328,331,r 1266,299,331,319,331,r 1273,272,331,278,319,r 1281,278,319,278,319,b 1288,313,390,319,348,b 1296,313,370,331,357,b 1304,345,385,354,360,b 1311,348,385,357,375,b 1319,366,387,372,372,b 1326,348,385,369,375,r 1334,331,370,348,354,b 1341,345,370,348,351,r 1349,346,370,348,351,b 1357,345,364,350,350,b 1364,337,354,340,348,r 1372,287,346,301,313,r 1379,290,310,290,296,r 1387,281,346,299,322,b 1394,316,330,316,322,b 1402,313,343,316,325,r 1410,325,346,325,343,r 1417,299,325,316,319,r 1433,284,315,314,314,r 1440,293,310,308,308,r 1448,301,326,308,308,b 1455,292,316,304,316,b 1463,301,316,304,316,r 1470,301,343,313,343,b 1478,325,355,343,345,b 1486,340,375,340,375,b 1493,372,398,372,398,b 1501,372,398,387,398,r 1508,375,396,375,390,b 1516,354,389,375,389,r 1524,354,379,367,375,b 1531,370,381,370,378,r 1539,370,375,370,375,b 1546,363,382,370,372,r 1554,370,381,370,378,b 1562,370,379,372,374,r 1569,365,390,376,378,b 1577,384,398,390,398,b 1584,395,455,395,442,b 1592,415,484,427,442,r 1599,404,428,404,419,r 1607,378,404,384,404,r 1615,375,392,382,384,r 1622,369,384,382,384,b 1630,369,393,382,384,b 1637,340,384,354,384,r 1645,337,350,345,350,r 1653,316,352,316,352,r 1660,301,338,313,323,r 1668,266,325,284,313,r 1675,249,300,249,272,r 1683,252,273,258,272,r 1691,172,257,176,257,r 1698,161,205,172,176,r 1706,161,187,172,176,b 1713,152,178,152,170,r 1721,140,157,146,157,r 1728,127,158,146,158,b 1736,149,225,155,208,b 1744,193,237,193,215,b 1751,187,241,202,219,r 1759,200,281,208,278,b 1766,253,290,278,290,b 1774,245,340,278,293,b 1782,281,307,293,293,b 1789,263,296,266,290,r 1797,256,280,263,266,b 1804,240,266,260,266,r 1812,237,267,255,258,b 1820,248,255,250,255,b 1827,243,270,254,256,b 1835,237,250,243,246,b 1842,251,270,251,255,b 1850,252,281,255,281,b`;
candles.split(' ').forEach(c => {
  const [x, h, l, a, b, d] = c.split(',').map((v, i) => i < 5 ? +v : v);
  const bottom = Math.max(b, a + 1);
  add(price, 'path', {
    d: `M${x + .5} ${h}V${a}M${x + .5} ${bottom}V${l}M${x - 1.5} ${a + .5}h4V${bottom - .5}h-4z`,
    fill: 'none', stroke: d === 'r' ? '#e8180c' : '#1560d0'
  });
});

line(price, '52,841 62,838 104,816 143,812 175,811 200,805 250,793 310,773 360,767 390,761 430,758 480,760 560,758 600,755 680,744 732,738 760,731 830,720 895,709 960,701 1040,689 1100,680 1120,678 1210,660 1280,640 1345,623 1400,605 1440,594 1470,583 1505,577 1560,565 1620,556 1660,549 1695,539 1730,524 1760,516 1800,507 1851,494', '#000', 2);
line(price, '347,893 378,889 408,886 440,884 478,883 560,880 640,874 735,867 780,859 846,854 924,848 971,840 1017,838 1071,832 1120,827 1200,815 1286,802 1359,788 1433,777 1567,761 1640,750 1700,742 1740,733 1760,729 1800,723 1852,716', '#36f', 4);
line(price, '49,422 65,420 90,415 110,413 152,411 200,407 250,401 310,393 380,389 435,385 480,385 575,382 686,376 796,368 943,365 1065,359 1120,357 1180,354 1230,350 1280,346 1345,341 1400,337 1440,333 1480,329 1560,326 1600,325 1660,323 1700,320 1740,316 1800,313', '#f0f', 6);
hline(price, 306, 1815, 1852, '#f0f', 2);
line(price, '52,767 59,737 66,710 73,680 80,653 87,627 96,597 107,578 121,573 143,564 157,562 175,557 193,548 211,534 228,522 246,505 267,482 283,467 297,453 310,443 333,437 360,431 387,424 420,417 480,416 551,415 588,416 637,411 722,411 784,413 802,418 820,425 835,441 846,457 856,470 864,475 874,474 896,471 924,471 953,469 981,467 1006,470 1028,476 1049,483 1069,489 1081,489 1103,482 1120,478 1140,474 1160,468 1190,455 1210,444 1235,431 1250,416 1265,405 1280,390 1300,381 1320,372 1345,359 1365,348 1380,337 1400,328 1420,316 1435,307 1450,299 1470,292 1500,287 1530,281 1560,273 1575,271 1620,269 1650,267 1675,261 1695,252 1715,233 1730,217 1745,210 1760,205 1790,203 1820,200 1852,198', '#0f0', 5);
line(price, '650,893 704,860 731,840 760,817 785,793 803,781 822,778 842,767 860,754 899,751 910,746 931,742 988,741 1028,739 1060,734 1096,733 1120,731 1194,731 1212,724 1273,705 1316,699 1359,687 1396,666 1427,657 1447,652 1463,643 1480,638 1497,631 1540,625 1570,618 1600,608 1640,592 1665,580 1685,569 1710,563 1730,560 1750,555 1770,545 1790,532 1820,511 1852,488', '#0f0', 5);

hline(price, 80.5, 50, 1853, '#f9c', 5);
hline(price, 126.5, 49, 1866, '#f00');
hline(price, 134.5, 49, 1866, '#f00');
hline(price, 180.5, 49, 52, '#f00', 5);
hline(price, 180.5, 100, 1853, '#f00', 7);
hline(price, 245.5, 50, 52, '#f90', 5);
hline(price, 245.5, 103, 1853, '#f90', 5);
hline(price, 310.5, 49, 1866, '#0f0', 7);
hline(price, 375.5, 108, 1853, '#0ff', 5);
hline(price, 432, 49, 1866, '#808080', 2);
hline(price, 440.5, 50, 1853, '#00f', 7);
hline(price, 444.5, 49, 1851, '#808080');
hline(price, 750.5, 49, 1866, '#f00', 3);
hline(price, 790.5, 52, 1850, '#000');
hline(price, 797.5, 52, 1866, '#f0c', 1, '5 3');
hline(price, 844.5, 49, 1866, '#930', 3);
hline(price, 862, 49, 1866, '#808080', 2);

dots('120,272 135,273 150,275 180,282 225,298 257,306 287,314 360,332 430,350 455,357 476,366 496,372 551,394 612,416 686,435 704,445 735,455 772,466 825,480 880,495 930,509 977,522', '#9c0');
dots('59,830 66,815 74,803 82,790 90,775 97,762 105,747 112,733', '#9c0');
dots('1015,840 1040,839 1083,835 1110,830 1169,825 1188,818 1224,782 1249,741 1280,698 1311,655 1345,610 1375,575 1400,555 1417,538 1440,515 1470,490 1500,473 1540,445 1560,434 1577,424', '#9c0');
dots('1585,273 1607,274 1630,278 1660,280', '#9c0');
dots('1668,483 1690,481 1720,473 1745,458 1765,446 1800,427 1830,410 1850,397', '#9c0');
['112,272 120,280 127,297 135,313 143,328 150,343 158,369 165,394 173,417 188,460 196,479 203,498 211,515 218,532', '325,430 347,447 370,472 393,494 423,519 431,528 438,542 446,561 454,589 461,621 469,649 476,674', '674,589 704,593', '803,469 825,475 856,487 871,496 894,508 924,524 939,541 947,547', '1106,492 1120,494 1152,498', '1288,272 1320,280 1364,292', '1478,281 1486,282 1501,292 1516,303 1540,318 1546,322 1584,340 1592,349 1600,361 1607,372', '1736,126 1744,127 1752,131 1759,137 1766,148 1774,160 1789,197 1797,212 1804,226']
  .forEach(p => dots(p, '#00f'));
['59,815 67,787 74,761 82,736 89,704 97,673 105,637', '234,818 241,804 249,792 256,773 264,754 272,737 279,720 287,704 294,690 302,676 309,662 317,650', '492,840 510,835 530,829 545,823 552,817 560,807 567,794 583,768 590,755 598,746 606,738 621,718 628,706 636,695 651,673 659,662 666,653', '712,653 719,652 742,641 757,623 765,614 780,599 788,592 795,585', '954,624 985,614 1000,604 1023,592 1046,580 1068,571 1083,567 1099,558', '1159,554 1175,550 1190,537 1197,528 1205,513 1212,497 1220,482 1228,464 1243,434 1250,415 1258,401 1266,388 1273,373 1281,355', '1372,389 1387,386 1402,378 1418,371 1440,363 1470,351', '1615,483 1637,473 1653,457 1668,429 1683,385 1698,334 1713,277 1721,253 1728,228', '1812,340 1835,334 1850,331']
  .forEach(p => dots(p, '#f00'));

[[105, 288], [112, 426], [249, 417], [317, 467], [120, 517]].forEach(([x, y]) =>
  add(price, 'path', { d: `M${x - 3} ${y - 3}l7 7M${x + 4} ${y - 3}l-7 7M${x + .5} ${y - 3}v7M${x - 3} ${y + .5}h7`, stroke: '#080' }));
[[52, 476, '#808'], [1691, 276, '#808'], [1668, 323, '#0f0']].forEach(([x, y, c]) =>
  poly(price, `${x},${y - 5} ${x + 5},${y} ${x + 2},${y} ${x + 2},${y + 5} ${x - 2},${y + 5} ${x - 2},${y} ${x - 5},${y}`, c));

line(price, '1863.5,77 1863.5,844', '#e8180c', 3);
line(price, '1863.5,844 1863.5,893', '#1560d0', 3);
add(price, 'rect', { x: 52.500, y: 82.500, width: 4, height: 5, fill: '#ccc', stroke: '#777' });

// Lower indicator
const subLevels = [913, 949, 986, 1022];
backdrop(volume, 894, 1038, subLevels);
const subFast = '52,1005 60,997 75,987 82,978 92,977 97,973 107,983 120,997 127,960 135,956 144,965 150,977 158,968 174,974 195,960 204,953 212,958 235,941 241,946 262,932 272,931 280,926 288,929 302,923 318,939 326,941 333,939 342,944 357,944 375,939 412,937 425,947 438,956 446,960 454,972 470,967 480,962 495,963 525,964 545,963 558,957 600,960 620,954 630,958 690,957 710,952 738,952 750,944 760,946 766,951 772,949 790,953 805,957 870,954 900,955 907,961 922,961 955,961 970,958 985,954 1005,958 1060,957 1072,958 1084,951 1100,954 1110,958 1135,958 1155,954 1160,950 1170,951 1175,947 1182,951 1197,939 1205,945 1220,936 1230,943 1243,932 1250,936 1258,934 1273,918 1281,922 1289,934 1302,941 1315,946 1330,944 1345,940 1363,941 1378,931 1396,937 1420,933 1440,930 1450,938 1467,941 1493,954 1508,955 1530,951 1565,949 1584,959 1600,953 1615,949 1630,951 1660,942 1668,933 1675,922 1683,933 1692,918 1699,912 1706,918 1721,908 1735,922 1744,929 1752,926 1770,938 1800,938 1820,931 1840,929 1851,933';
const subSlow = '52,1035 80,1029 100,1021 120,1016 145,1006 175,995 204,982 235,969 285,957 302,950 340,945 375,939 400,937 435,937 455,941 500,949 535,954 570,957 640,960 700,958 760,955 800,953 910,953 940,956 980,957 1090,958 1180,955 1240,951 1281,945 1310,941 1370,937 1445,935 1480,939 1530,943 1600,948 1630,951 1670,951 1690,948 1720,940 1740,937 1770,933 1800,932 1830,928 1851,928';
ribbon(volume, subFast, subSlow);
line(volume, subFast, '#f00');
line(volume, subSlow, '#00f');
line(volume, '52,1035 90,1031 130,1026 175,1020 230,1010 270,1002 310,992 350,984 400,974 450,963 500,955 560,952 630,949 670,949 740,953 800,955 880,957 950,956 1072,956 1140,955 1230,955 1280,952 1370,947 1440,944 1560,942 1680,941 1780,939 1851,939', '#930', 2);
line(volume, '51,1024 340,1023 700,1022 866,1021 1160,1020 1340,1019 1640,1017 1852,1017', '#0f0', 4);

// Axis rules, ticks and crosshair
[[price, 77, 894, 10.76, 109, levels], [volume, 894, 1038, 7.27, 913, subLevels]].forEach(([svg, top, bottom, step, origin, marks]) => {
  rect(svg, 6, top, 48, bottom, '#fff');
  rect(svg, 1867, top, 1913, bottom, '#fff');
  line(svg, `48.5,${top} 48.5,${bottom}`, '#999');
  line(svg, `1866.5,${top} 1866.5,${bottom}`, '#999');
  for (let y = origin - step * 2; y < bottom - 5; y += step) {
    const t = Math.round(y) + .5;
    hline(svg, t, 1867, 1869, '#999');
    if (svg === volume) hline(svg, t, 46, 48, '#999');
  }
  marks.forEach(y => {
    hline(svg, y + .5, 1867, 1873, '#999');
    if (svg === volume) hline(svg, y + .5, 42, 48, '#999');
  });
  line(svg, `1072.5,${top} 1072.5,${bottom}`, '#f00');
  line(svg, `6.500,${top} 6.500,${bottom}`, '#999');
  line(svg, `1912.5,${top} 1912.5,${bottom}`, '#999');
});
hline(volume, 894.5, 6, 1913, '#999');
```
